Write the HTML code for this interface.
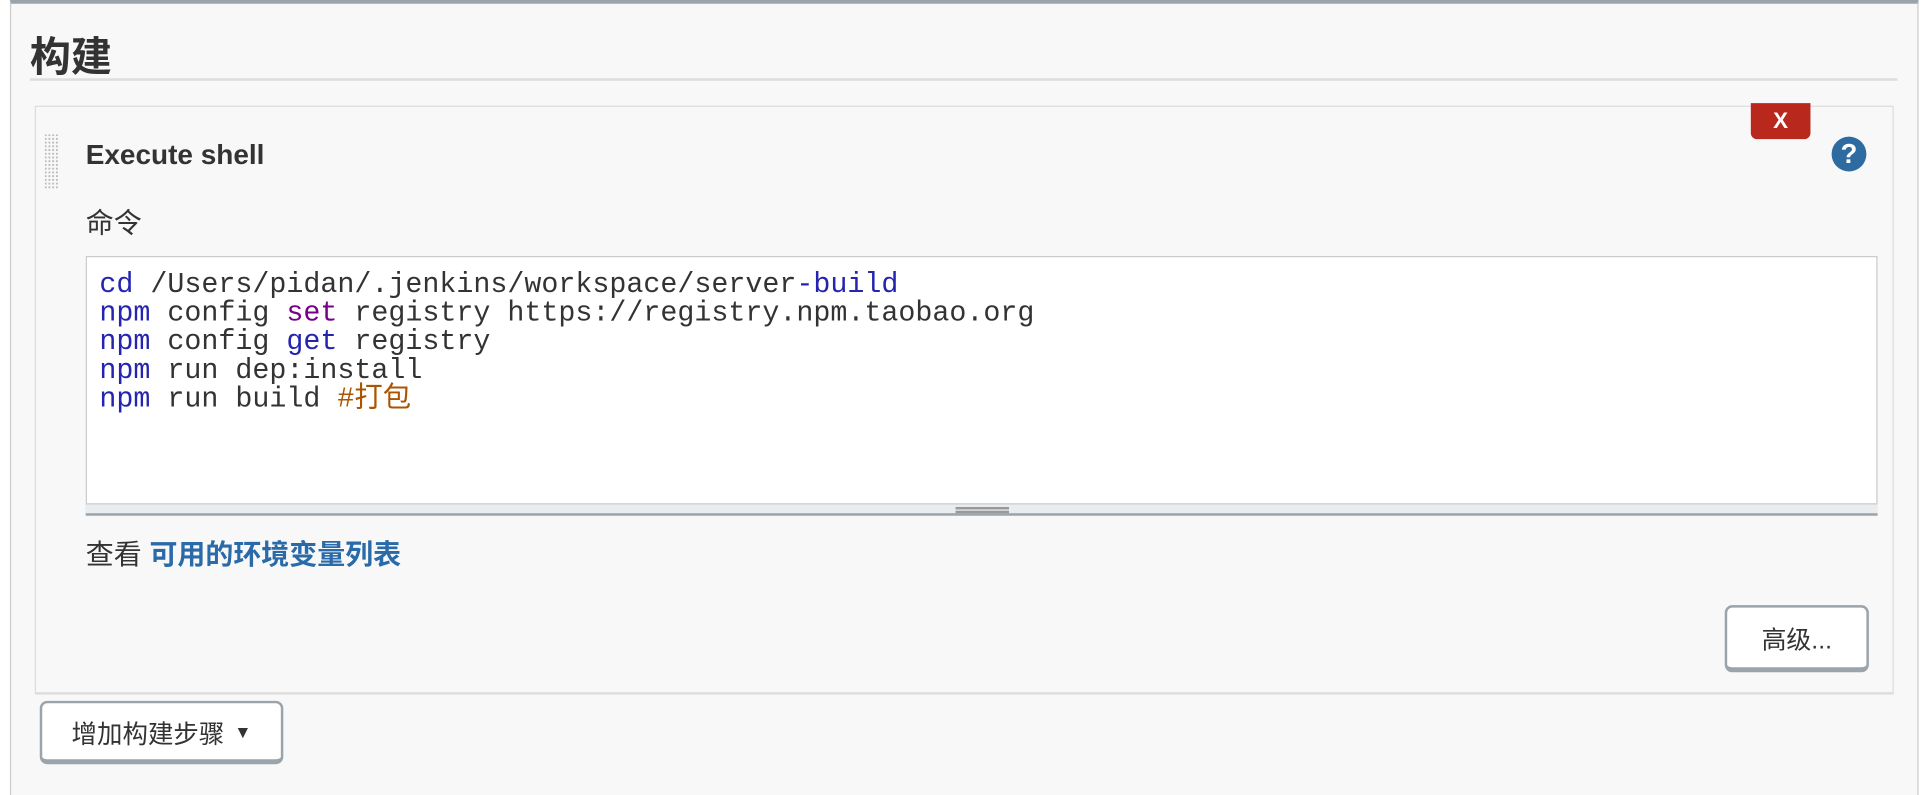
<!DOCTYPE html>
<html><head><meta charset="utf-8"><style>
html,body{margin:0;padding:0;width:1926px;height:790px;overflow:hidden;background:#fff;}
#s{position:absolute;left:0;top:0;width:1550px;height:636px;transform:scale(1.2426);transform-origin:0 0;font-family:"Liberation Sans","Noto Sans CJK SC",sans-serif;color:#333;}
.frame{position:absolute;left:8px;top:0;width:1536px;height:640px;background:#f8f8f8;border-left:1px solid #ccc;border-right:1px solid #ccc;border-top:3px solid #9aa4aa;box-sizing:border-box;}
.abs{position:absolute;}
.code{font-family:"Liberation Mono",monospace;font-size:22.8px;line-height:23px;white-space:pre;color:#333;}
.k{color:#2424b0}.p{color:#770088}.c{color:#aa5500}
.btn{position:absolute;background:#fff;border:2px solid #9aa4aa;border-bottom-width:4px;border-radius:6px;box-sizing:border-box;font-size:20px;color:#333;display:flex;align-items:center;justify-content:center;}
</style></head><body><div id="s">
<div class="frame"></div>
<div class="abs" style="left:24px;top:19px;font-size:33px;font-weight:bold;color:#333;">构建</div>
<div class="abs" style="left:24px;top:63px;width:1503px;height:2px;background:#ddd;"></div>
<div class="abs" style="left:28px;top:85px;width:1496px;height:474px;border:1px solid #ddd;border-bottom-width:2px;box-sizing:border-box;"></div>
<svg class="abs" style="left:36px;top:108px" width="12" height="44"><defs><pattern id="d" width="3" height="3" patternUnits="userSpaceOnUse"><rect width="1.5" height="1.5" fill="#bbb"/></pattern></defs><rect width="12" height="44" fill="url(#d)"/></svg>
<div class="abs" style="left:69px;top:112px;font-size:22.5px;font-weight:bold;color:#333;">Execute shell</div>
<div class="abs" style="left:1409px;top:83px;width:48px;height:29px;background:#b9281c;border-radius:0 0 5px 5px;color:#fff;font-weight:bold;font-size:18px;text-align:center;line-height:29px;">X</div>
<div class="abs" style="left:1474px;top:110px;width:28px;height:28px;border-radius:50%;background:#2e6ba0;color:#fff;font-weight:bold;font-size:22px;text-align:center;line-height:28px;">?</div>
<div class="abs" style="left:69px;top:162px;font-size:22.5px;">命令</div>
<div class="abs" style="left:69px;top:206px;width:1442px;height:209px;background:#fff;border:1px solid #ccc;box-sizing:border-box;"></div>
<div class="abs" style="left:69px;top:405px;width:1442px;height:10px;background:#e9edf0;border-top:1px solid #ccc;border-bottom:2px solid #9aa4aa;box-sizing:border-box;"></div>
<div class="abs" style="left:769px;top:408px;width:43px;height:2px;background:#999;box-shadow:0 3px 0 #999;"></div>
<div class="abs code" style="left:80px;top:218px;"><span class="k">cd</span> /Users/pidan/.jenkins/workspace/server<span class="k">-build</span>
<span class="k">npm</span> config <span class="p">set</span> registry https://registry.npm.taobao.org
<span class="k">npm</span> config <span class="k">get</span> registry
<span class="k">npm</span> run dep:install
<span class="k">npm</span> run build <span class="c">#打包</span></div>
<div class="abs" style="left:69px;top:429px;font-size:22.5px;">查看 <span style="color:#2a6aa8;font-weight:bold;">可用的环境变量列表</span></div>
<div class="btn" style="left:1388px;top:487px;width:116px;height:54px;">高级...</div>
<div class="btn" style="left:32px;top:564px;width:196px;height:51px;font-size:20.5px;">增加构建步骤 <span style="font-size:14px;margin-left:8px;">▼</span></div>
</div></body></html>
